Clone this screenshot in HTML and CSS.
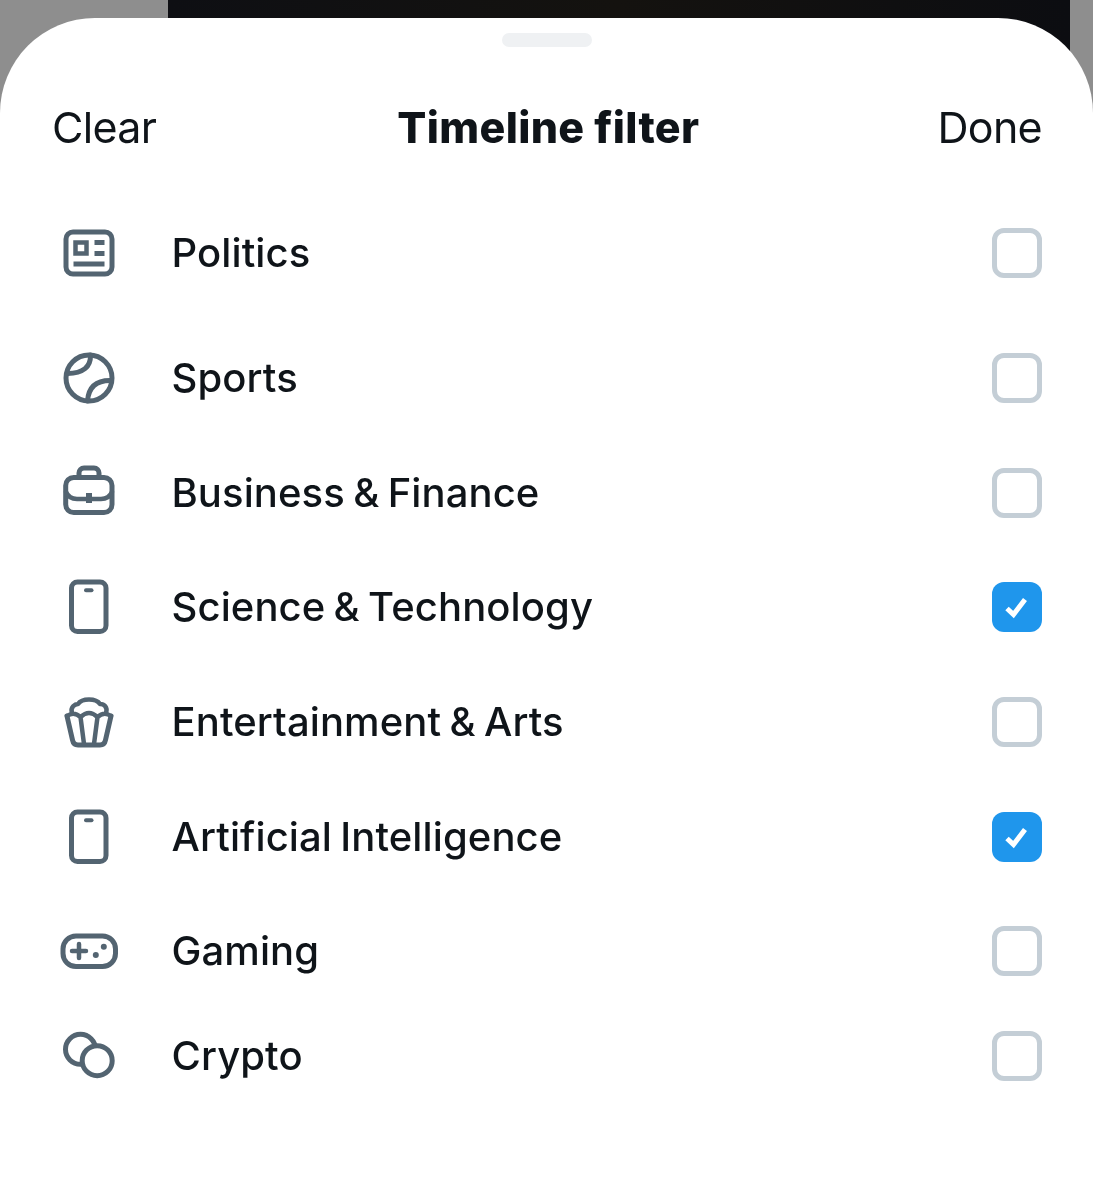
FILE: index.html
```html
<!DOCTYPE html>
<html lang="en">
<head>
<meta charset="utf-8">
<title>Timeline filter</title>
<link rel="stylesheet" href="styles.css">
</head>
<body>
<div class="screen">
  <div class="photo"></div>
  <main class="sheet">
    <div class="handle"></div>
    <header class="header">
      <span class="action">Clear</span>
      <h1 class="title">Timeline filter</h1>
      <span class="action">Done</span>
    </header>
    <ul class="list">
      <li class="row row-first">
        <svg class="icon" viewBox="0 0 60 60"><rect x="7" y="9" width="46" height="42" rx="7"/><rect class="sharp" x="16.500" y="19.500" width="11" height="11" stroke-width="4.500"/><path class="butt" d="M35.500 19.500H45.500M35.500 30.500H45.500M14.500 41H45.500" stroke-width="5"/></svg>
        <span class="label">Politics</span>
        <span class="box"></span>
      </li>
      <li class="row">
        <svg class="icon" viewBox="0 0 60 60"><circle cx="30" cy="30" r="23"/><path d="M31.500 7Q32 25 8.500 25.500M52 32.500Q30 32 28.500 53"/></svg>
        <span class="label">Sports</span>
        <span class="box"></span>
      </li>
      <li class="row">
        <svg class="icon" viewBox="0 0 60 60"><rect x="6.700" y="14.500" width="46.300" height="35" rx="8"/><path d="M20 14V10a5 5 0 0 1 5-5h10a5 5 0 0 1 5 5v4"/><path d="M7 29Q10 36 18 36H42Q50 36 53 29" stroke-width="4.500"/><path class="butt" d="M30 30V40" stroke-width="6"/></svg>
        <span class="label">Business &amp; Finance</span>
        <span class="box"></span>
      </li>
      <li class="row">
        <svg class="icon" viewBox="0 0 60 60"><rect x="12.500" y="5" width="34.500" height="49.500" rx="6"/><path d="M27 13.300H32.500" stroke-width="4"/></svg>
        <span class="label">Science &amp; Technology</span>
        <span class="box box-on"><svg class="tick" viewBox="0 0 50 50"><path d="M15 26.500L21.500 32.500L33 17.500"/></svg></span>
      </li>
      <li class="row">
        <svg class="icon" viewBox="0 0 60 60"><path d="M8 24L13.500 48Q14.500 53 19 53H41Q45.500 53 46.500 48L52 24" stroke-width="5"/><path d="M8 24Q15 19 21.500 25Q30 17 38.500 25Q45 19 52 24M13 21C11 15 16 12 19 12C23 6 37 6 41 12C45 12 49 15 47 21M21.500 25L25 52M38.500 25L35 52" stroke-width="4.500"/></svg>
        <span class="label">Entertainment &amp; Arts</span>
        <span class="box"></span>
      </li>
      <li class="row">
        <svg class="icon" viewBox="0 0 60 60"><rect x="12.500" y="5" width="34.500" height="49.500" rx="6"/><path d="M27 13.300H32.500" stroke-width="4"/></svg>
        <span class="label">Artificial Intelligence</span>
        <span class="box box-on"><svg class="tick" viewBox="0 0 50 50"><path d="M15 26.500L21.500 32.500L33 17.500"/></svg></span>
      </li>
      <li class="row">
        <svg class="icon" viewBox="0 0 60 60"><rect x="4" y="15" width="52.500" height="30.500" rx="13"/><path d="M13 30H27M20 23V37" stroke-width="4.500"/><circle class="dot" cx="44.800" cy="25.700" r="3"/><circle class="dot" cx="36.800" cy="34" r="3"/></svg>
        <span class="label">Gaming</span>
        <span class="box"></span>
      </li>
      <li class="row row-last">
        <svg class="icon" viewBox="0 0 60 60"><circle cx="21.500" cy="23.300" r="15"/><circle class="front" cx="38.200" cy="34.700" r="15"/></svg>
        <span class="label">Crypto</span>
        <span class="box"></span>
      </li>
    </ul>
  </main>
</div>
</body>
</html>
```
FILE: styles.css
```css
* { box-sizing: border-box; }
html, body { margin: 0; padding: 0; }
body { background: #fff; font-family: Inter, "Liberation Sans", sans-serif; color: #0f1419; }
.screen {
  position: relative;
  width: 1093px;
  height: 1179px;
  padding-top: 18px;
  overflow: hidden;
  background: #8e8e8e;
  filter: blur(0.4px);
}
.photo {
  position: absolute;
  top: 0;
  left: 168px;
  width: 902px;
  height: 120px;
  background: linear-gradient(90deg, #0e0f13, #14120f 50%, #0c0d11);
}
.sheet {
  position: relative;
  height: 1161px;
  background: #fff;
  border-radius: 95px 95px 0 0;
}
.handle {
  position: absolute;
  top: 15px;
  left: 502px;
  width: 90px;
  height: 14px;
  border-radius: 7px;
  background: #eff1f3;
}
.header {
  display: flex;
  justify-content: space-between;
  align-items: center;
  height: 60px;
  margin-bottom: 1px;
  padding: 79px 51px 0 52px;
  box-sizing: content-box;
}
.action { font-size: 43px; font-weight: 400; letter-spacing: -0.7px; line-height: 60px; }
.title { margin: 0 0 0 3px; font-size: 43px; font-weight: 800; letter-spacing: 0.35px; line-height: 60px; }
.list {
  display: flex;
  flex-direction: column;
  gap: 54.7px;
  margin: 0;
  padding: 65px 51px 0 58.5px;
  list-style: none;
}
.row { display: flex; align-items: center; height: 60px; }
.row-first { margin-bottom: 10.3px; }
.row-last { margin-top: -10px; }
.icon {
  flex: none;
  width: 60px;
  height: 60px;
  margin-right: 53px;
  fill: none;
  stroke: #536471;
  stroke-width: 5;
  stroke-linecap: round;
  stroke-linejoin: round;
}
.icon .dot { fill: #536471; stroke: none; }
.icon .front { fill: #fff; }
.icon .butt { stroke-linecap: butt; }
.icon .sharp { stroke-linejoin: miter; }
.label { flex: 1; font-size: 40px; font-weight: 500; letter-spacing: 0.1px; word-spacing: -2.5px; line-height: 60px; }
.box {
  flex: none;
  width: 50px;
  height: 50px;
  border: 5px solid #c4ced6;
  border-radius: 12px;
}
.box-on { border: 0; background: #1f96ec; }
.tick {
  display: block;
  width: 50px;
  height: 50px;
  fill: none;
  stroke: #fff;
  stroke-width: 5;
}
```
